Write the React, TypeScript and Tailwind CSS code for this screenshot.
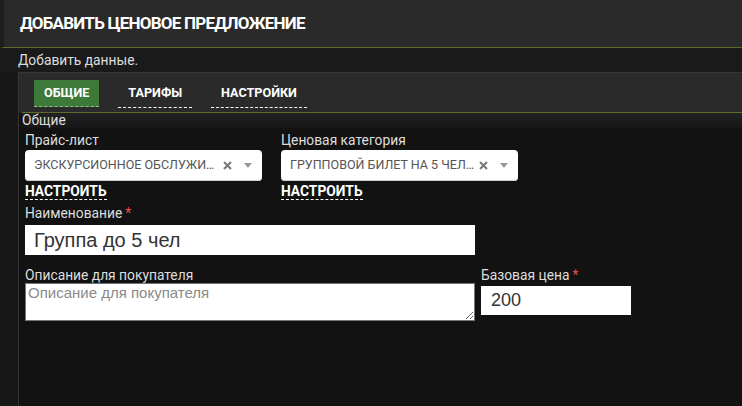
import * as React from "react";

function Req() {
  return <span className="text-[#e0514f] ml-[3px]">*</span>;
}

function Select({ value }: { value: string }) {
  return (
    <div className="w-[237px] h-[31px] bg-white rounded-[4px] flex items-center pl-[9px] pr-[10px] text-[12.5px] text-[#555] shadow-[inset_0_-1px_0_#ccc]">
      <span className="w-[186px] truncate">{value}</span>
      <svg className="ml-[4px]" width="9" height="9" viewBox="0 0 9 9">
        <path d="M1 1 L8 8 M8 1 L1 8" stroke="#777" strokeWidth="2" />
      </svg>
      <svg className="ml-[12px]" width="8" height="5" viewBox="0 0 8 5">
        <path d="M0 0 H8 L4 5 Z" fill="#999" />
      </svg>
    </div>
  );
}

function Configure() {
  return (
    <div className="mt-[1px] inline-block text-[13.8px] font-bold text-white border-b border-dashed border-white leading-[15px]">
      НАСТРОИТЬ
    </div>
  );
}

export default function App() {
  const tabs = ["ОБЩИЕ", "ТАРИФЫ", "НАСТРОЙКИ"];
  return (
    <div className="w-[742px] h-[406px] overflow-hidden bg-[#181818] flex flex-col font-['Roboto',sans-serif] text-[13.8px] text-[#ddd]">
      <div className="h-[48px] shrink-0 bg-[#2a2a2a] border-l-4 border-[#1e1e1e] border-b border-b-[#5a6b2c] flex items-center pl-[16px]">
        <h1 className="text-[17px] font-bold text-white tracking-[-0.75px]">ДОБАВИТЬ ЦЕНОВОЕ ПРЕДЛОЖЕНИЕ</h1>
      </div>
      <div className="h-[24px] shrink-0 bg-[#1a1a1a] pl-[18px] flex items-center">Добавить данные.</div>
      <div className="flex-1 ml-[18px] border-l border-t border-[#363636] flex flex-col">
        <div className="h-[40px] shrink-0 bg-[#2a2a2a] pl-[3px]">
          <div className="h-full border-b border-[#5a6b2c] flex items-start gap-[19px] pl-[12px] pt-[7px]">
            {tabs.map((t, i) =>
              i === 0 ? (
                <div key={t} className="h-[27px] px-[10px] bg-[#3d7a3a] text-white font-bold text-[12.6px] flex items-center border-b border-dashed border-[#8fbf8a]">
                  {t}
                </div>
              ) : (
                <div key={t} className="h-[28px] px-[10px] text-white font-bold text-[12.6px] flex items-center border-b border-dashed border-white">
                  {t}
                </div>
              )
            )}
          </div>
        </div>
        <div className="flex-1 bg-[#121212] pl-[3px]">
          <div className="h-[15px] bg-gradient-to-b from-[#222] to-[#161616] leading-[15px]">Общие</div>
          <div className="pl-[3px] pt-[5px]">
            <div className="flex gap-[19px]">
              <div className="flex flex-col">
                <div className="mb-[2px] leading-[15px]">Прайс-лист</div>
                <Select value="ЭКСКУРСИОННОЕ ОБСЛУЖИВАНИЕ" />
                <div><Configure /></div>
              </div>
              <div className="flex flex-col">
                <div className="mb-[2px] leading-[15px]">Ценовая категория</div>
                <Select value="ГРУППОВОЙ БИЛЕТ НА 5 ЧЕЛОВЕК" />
                <div><Configure /></div>
              </div>
            </div>
            <div className="mt-[4px] leading-[15px]">Наименование<Req /></div>
            <div className="mt-[4px] w-[450px] h-[30px] bg-white flex items-center pl-[9px] text-[20px] text-[#333] font-['Liberation_Sans',sans-serif]">
              Группа до 5 чел
            </div>
            <div className="flex gap-[6px] mt-[13px]">
              <div className="flex flex-col">
                <div className="leading-[15px]">Описание для покупателя</div>
                <textarea
                  className="w-[450px] h-[38px] bg-white border border-[#767676] text-[15px] text-[#333] placeholder:text-[#8a8a8a] px-[2px] pt-[1px] leading-[16px] font-['Liberation_Sans',sans-serif] outline-none"
                  placeholder="Описание для покупателя"
                />
              </div>
              <div className="flex flex-col">
                <div className="leading-[15px]">Базовая цена<Req /></div>
                <div className="mt-[3px] w-[150px] h-[29px] bg-white flex items-center pl-[10px] text-[18px] text-[#333] font-['Liberation_Sans',sans-serif]">
                  200
                </div>
              </div>
            </div>
          </div>
        </div>
      </div>
    </div>
  );
}
